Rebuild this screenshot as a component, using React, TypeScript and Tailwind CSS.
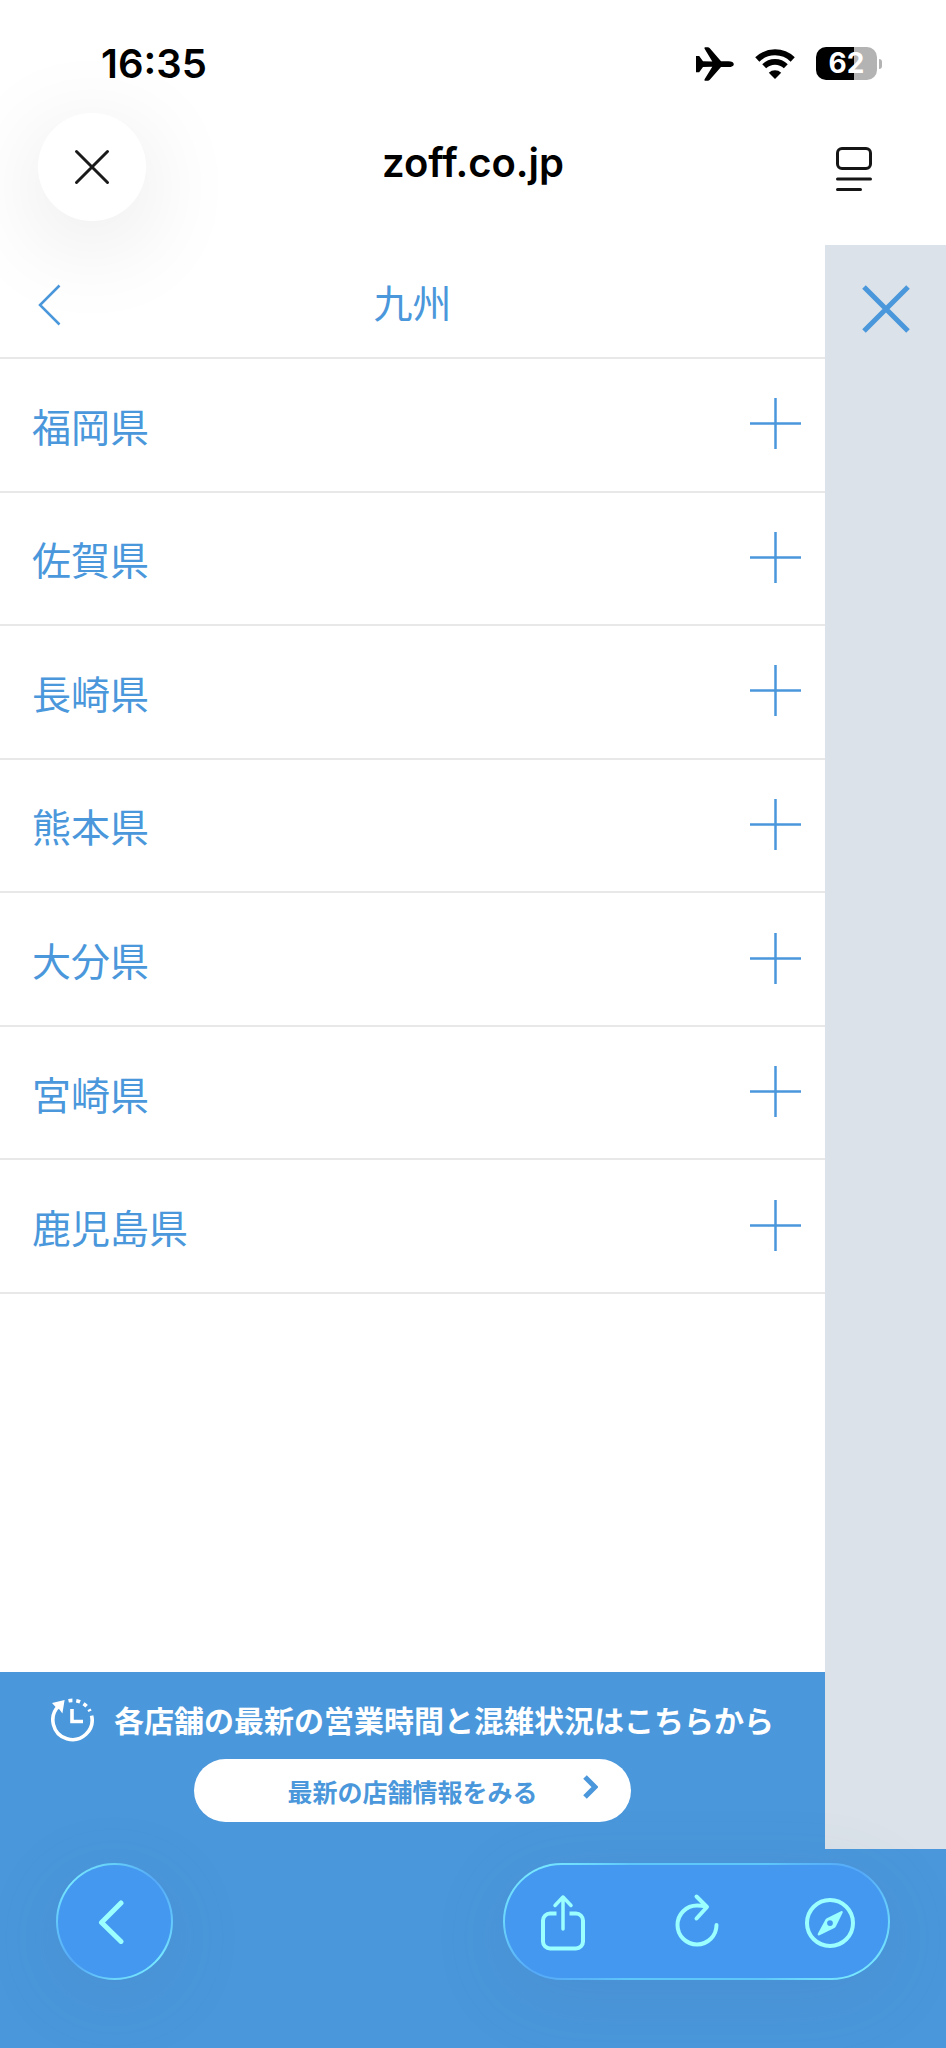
const prefectures = [
  "福岡県",
  "佐賀県",
  "長崎県",
  "熊本県",
  "大分県",
  "宮崎県",
  "鹿児島県",
];

function StatusBar() {
  return (
    <div className="flex h-[113px] items-center justify-between pt-[14px] pl-[101px] pr-16">
      <span className="text-[40px] leading-[48px] font-semibold">16:35</span>

      <div className="flex items-center gap-[21px]">
        <svg width="38" height="34" viewBox="0 0 38 34" fill="currentColor">
          <path d="M0 9h3.200l3.800 5.200 9.300.3L8.600 1.800C8.200.8 8.600.3 9.400.3h2.400c.8 0 1.400.3 2 1L25 14.300h7.500c3.200 0 5.300 1.300 5.300 2.900s-2.100 2.900-5.300 2.900H25L13.800 32.700c-.6.7-1.200 1-2 1H9.400c-.8 0-1.200-.5-.8-1.500L16.300 19.800l-9.300.3-3.800 5.200H0z" />
        </svg>

        <svg width="40" height="30" viewBox="0 0 40 30" fill="none">
          <path d="M2.300 10.500a25.500 25.500 0 0 1 35.400 0" stroke="currentColor" strokeWidth="6" />
          <path d="M9.200 17.300a15.500 15.500 0 0 1 21.600 0" stroke="currentColor" strokeWidth="5.600" />
          <path d="M20 30l-6.200-6.200a9 9 0 0 1 12.400 0z" fill="currentColor" />
        </svg>

        <div className="flex items-center gap-0.5">
          <div className="flex h-[33px] w-[61px] items-center justify-center rounded-[10px] bg-linear-to-r from-black from-62% to-[#b3b3b3] to-62% text-[28px] leading-[33px] font-bold text-white">
            62
          </div>
          <div className="h-2.5 w-[3px] rounded-r-full bg-[#b3b3b3]" />
        </div>
      </div>
    </div>
  );
}

function BrowserBar() {
  return (
    <div className="flex h-[132px] items-start justify-between px-[38px]">
      <button
        aria-label="閉じる"
        className="flex size-[108px] items-center justify-center rounded-full bg-white shadow-[0_20px_100px_rgba(0,0,0,0.11)]"
      >
        <svg width="36" height="36" viewBox="0 0 36 36" fill="none" stroke="#1a1a1a" strokeWidth="3" strokeLinecap="round">
          <path d="M2.500 2.500l31 31M33.500 2.500l-31 31" />
        </svg>
      </button>

      <p className="flex h-[108px] items-center pb-2 text-[40px] leading-[48px] font-semibold">
        zoff.co.jp
      </p>

      <button
        aria-label="リーダー表示"
        className="flex size-[108px] items-center justify-center pt-1"
      >
        <svg width="36" height="46" viewBox="0 0 36 46" fill="none" stroke="#151515" strokeWidth="3" strokeLinecap="round">
          <rect x="1.500" y="2.500" width="33" height="20" rx="4.500" />
          <path d="M1.500 33h33M1.500 43.500h23" />
        </svg>
      </button>
    </div>
  );
}

function StoreBanner() {
  return (
    <section className="flex h-[177px] flex-col items-center bg-[#4a97db]">
      <div className="flex h-[87px] items-center justify-center gap-5 pt-2 text-white">
        <svg width="43" height="46" viewBox="0 0 43 46" fill="none" stroke="currentColor">
          <path d="M40.600 18.600A19.600 19.600 0 1 1 8 8.800" strokeWidth="3.600" />
          <path d="M17.500 3.800a19.600 19.600 0 0 1 21.500 10.400" strokeWidth="3.600" strokeDasharray="4 3.800" />
          <path d="M1 6L13.600 3 11.400 16.500 8.500 12.500 5.500 11z" fill="currentColor" stroke="none" />
          <path d="M21 12v12.500h11" strokeWidth="3.600" />
        </svg>
        <p className="text-[30px] leading-[45px] font-bold whitespace-nowrap">
          各店舗の最新の営業時間と混雑状況はこちらから
        </p>
      </div>

      <a
        href="#stores"
        className="relative flex h-[63px] w-[437px] items-center justify-center rounded-full bg-white text-[25px] leading-9 font-bold text-[#4a97db]"
      >
        最新の店舗情報をみる
        <svg className="absolute top-4 right-[33px]" width="15" height="24" viewBox="0 0 15 24" fill="none" stroke="currentColor" strokeWidth="5">
          <path d="M2 2l10 10L2 22" />
        </svg>
      </a>
    </section>
  );
}

function Toolbar() {
  return (
    <nav className="flex h-[199px] items-start justify-between bg-[#4a97db] px-14 pt-[14px] text-[#9bffff]">
      <button
        aria-label="戻る"
        className="size-[117px] rounded-full bg-[conic-gradient(#66cff8,#55a9f8_45deg,#5fc0fa_80deg,#78e8ff_130deg,#6cd6fb_180deg,#55a9f8_225deg,#5fc0fa_260deg,#78e8ff_310deg,#66cff8)] p-0.5 shadow-[0_16px_70px_rgba(70,110,170,0.18)]"
      >
        <span className="flex size-full items-center justify-center rounded-full bg-[#4598ef] pr-2">
          <svg width="28" height="44" viewBox="0 0 28 44" fill="none" stroke="currentColor" strokeWidth="5" strokeLinecap="round" strokeLinejoin="round">
            <path d="M24 3L4.500 22.500 24 41.500" />
          </svg>
        </span>
      </button>

      <div className="h-[117px] w-[387px] rounded-full bg-[conic-gradient(#5fc8fa,#5fc8fa_50deg,#55a9f8_73deg,#6cd6fb_90deg,#78e8ff_108deg,#5fc8fa_130deg,#5fc8fa_230deg,#55a9f8_253deg,#6cd6fb_270deg,#78e8ff_288deg,#5fc8fa_310deg)] p-0.5 shadow-[0_16px_70px_rgba(70,110,170,0.18)]">
        <div className="flex size-full items-center justify-between rounded-full bg-[#4598ef] px-7">
          <button aria-label="共有">
            <svg width="60" height="60" viewBox="0 0 60 60" fill="none" stroke="currentColor" strokeWidth="4" strokeLinecap="round" strokeLinejoin="round">
              <path d="M23.500 21.500H17a7 7 0 0 0-7 7v21a7 7 0 0 0 7 7h26a7 7 0 0 0 7-7v-21a7 7 0 0 0-7-7h-6.500" strokeLinecap="butt" />
              <path d="M30 37V5M22 13.500L30 5l8 8.500" strokeWidth="3.500" />
            </svg>
          </button>
          <button aria-label="再読み込み">
            <svg width="60" height="60" viewBox="0 0 60 60" fill="none" stroke="currentColor" strokeWidth="4" strokeLinecap="round" strokeLinejoin="round">
              <path d="M49.500 33A19.500 19.500 0 1 1 30 13.500c3 0 6 .3 9 1" />
              <path d="M29.500 4.500L40 15 29.500 26.500" />
            </svg>
          </button>
          <button aria-label="Safariで開く">
            <svg width="60" height="60" viewBox="0 0 60 60" fill="none">
              <circle cx="30" cy="31" r="23" stroke="currentColor" strokeWidth="4" />
              <path
                fillRule="evenodd"
                fill="currentColor"
                d="M41 19.200c1.200-.7 2.200.2 1.600 1.500L36 34.300c-.4.800-.8 1.200-1.600 1.700L19.500 43.200c-1.300.7-2.300-.3-1.600-1.600L25.200 28c.4-.8.800-1.200 1.600-1.700zM30 28.200a2.900 2.900 0 1 0 0 5.800 2.900 2.900 0 0 0 0-5.800z"
              />
            </svg>
          </button>
        </div>
      </div>
    </nav>
  );
}

export default function App() {
  return (
    <div className="flex min-h-screen flex-col bg-white font-['Inter','Noto_Sans_CJK_JP',sans-serif] text-black">
      <header className="relative z-10">
        <StatusBar />
        <BrowserBar />
      </header>

      <main className="flex flex-1 font-['Noto_Sans_CJK_JP',sans-serif] text-[#4a97db]">
        <div className="flex flex-1 flex-col">
          <div className="grid h-[114px] grid-cols-[96px_1fr_96px] items-center border-b-2 border-[#e8e8e8]">
            <button aria-label="前のメニューに戻る" className="flex justify-center pt-2 pl-0.5">
              <svg width="24" height="42" viewBox="0 0 24 42" fill="none" stroke="currentColor" strokeWidth="2.500">
                <path d="M22.500 1.500L3 21l19.500 19.500" />
              </svg>
            </button>
            <h1 className="text-center text-[39px] leading-[58px]">九州</h1>
          </div>

          <ul className="grid h-[935px] auto-rows-fr">
            {prefectures.map((name) => (
              <li key={name} className="border-b-2 border-[#e8e8e8]">
                <button className="flex size-full items-center justify-between pr-6 pl-8 text-[39px] leading-[58px]">
                  {name}
                  <svg className="mb-0.5" width="51" height="51" viewBox="0 0 51 51" stroke="currentColor" strokeWidth="2.500">
                    <path d="M0 25.500h51M25.500 0v51" />
                  </svg>
                </button>
              </li>
            ))}
          </ul>

          <div className="mt-auto">
            <StoreBanner />
          </div>
        </div>

        <aside className="w-[121px] bg-[#dbe2e9]">
          <button aria-label="メニューを閉じる" className="flex h-32 w-full items-center justify-center">
            <svg width="48" height="48" viewBox="0 0 48 48" stroke="currentColor" strokeWidth="5">
              <path d="M2 2l44 44M46 2L2 46" />
            </svg>
          </button>
        </aside>
      </main>

      <Toolbar />
    </div>
  );
}
